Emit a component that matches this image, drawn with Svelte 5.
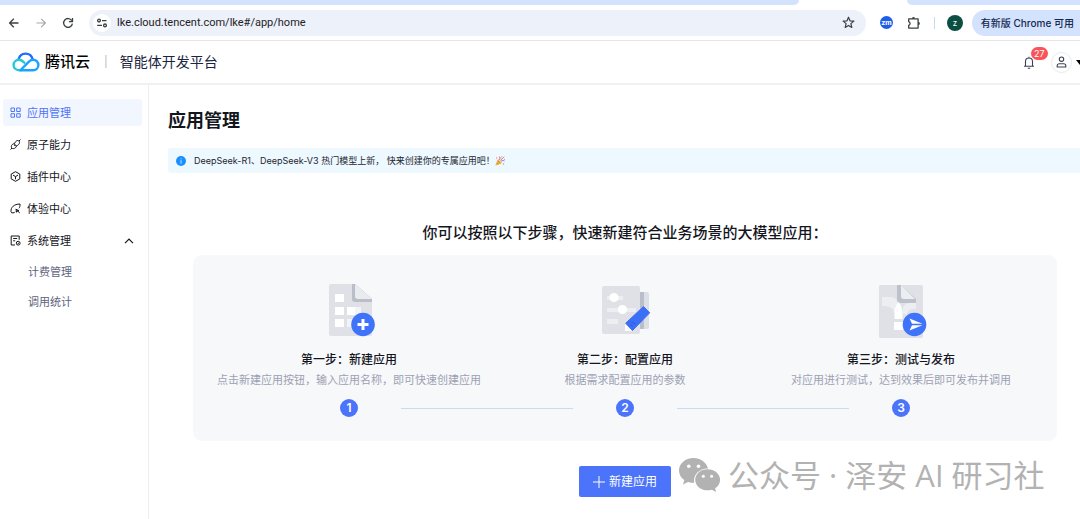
<script lang="ts">
  let expanded = $state(true)
  let current = $state('apps')
  let address = $state('lke.cloud.tencent.com/lke#/app/home')

  const NAV = [
    { id: 'apps',    label: '应用管理' },
    { id: 'atomic',  label: '原子能力' },
    { id: 'plugins', label: '插件中心' },
    { id: 'trial',   label: '体验中心' },
  ]

  const SYSTEM = [
    { id: 'billing', label: '计费管理' },
    { id: 'usage',   label: '调用统计' },
  ]

  const STEPS = [
    { id: 'create',  title: '第一步：新建应用',   desc: '点击新建应用按钮，输入应用名称，即可快速创建应用' },
    { id: 'config',  title: '第二步：配置应用',   desc: '根据需求配置应用的参数' },
    { id: 'publish', title: '第三步：测试与发布', desc: '对应用进行测试，达到效果后即可发布并调用' },
  ]
</script>

<div class="page">
  <!-- Browser chrome -->
  <div class="tabstrip">
    <span class="tab-rest left"></span>
    <span class="tab-rest right"></span>
  </div>
  <div class="toolbar">
    <div class="nav-buttons">
      <button class="icon-btn" aria-label="后退">
        <svg width="12" height="12" viewBox="0 0 12 12" fill="none" stroke="#3c4043" stroke-width="1.3">
          <path d="M10.500 6H1.800M5.800 1.800L1.600 6l4.200 4.200"/>
        </svg>
      </button>
      <button class="icon-btn" aria-label="前进">
        <svg width="12" height="12" viewBox="0 0 12 12" fill="none" stroke="#a5a8ac" stroke-width="1.2">
          <path d="M1.500 6h8.700M6.200 1.800L10.400 6l-4.200 4.200"/>
        </svg>
      </button>
      <button class="icon-btn" aria-label="刷新">
        <svg width="12" height="12" viewBox="0 0 12 12" fill="none" stroke="#3c4043" stroke-width="1.3">
          <path d="M9.800 3.600A4.400 4.400 0 1 0 10.400 6.600"/>
          <path d="M10.500 1v3.600H6.900"/>
        </svg>
      </button>
    </div>
    <div class="address">
      <button class="site-info" aria-label="网站信息">
        <svg width="12" height="12" viewBox="0 0 12 12" fill="none" stroke="#3c4043" stroke-width="1.3">
          <circle cx="3" cy="3.6" r="1.4"/>
          <path d="M6 3.6h4.5M1.2 8.4H6"/>
          <circle cx="9" cy="8.4" r="1.4"/>
        </svg>
      </button>
      <input class="url" aria-label="地址" bind:value={address} />
      <button class="icon-btn" aria-label="收藏">
        <svg width="13" height="13" viewBox="0 0 13 13" fill="none" stroke="#3c4043" stroke-width="1.2" stroke-linejoin="round">
          <path d="M6.5 1.2l1.5 3.6 3.9.3-3 2.5.9 3.8-3.3-2-3.3 2 .9-3.8-3-2.5 3.9-.3z"/>
        </svg>
      </button>
    </div>
    <div class="extensions">
      <button class="ext zoom-ext">zm</button>
      <button class="icon-btn" aria-label="扩展程序">
        <svg width="14" height="14" viewBox="0 0 14 14">
          <path fill="none" stroke="#3c4043" stroke-width="1.3" stroke-linejoin="round" d="M1.700 2.800h9.400v9.300H1.700V9.400a2 2 0 0 0 0-3.800z"/>
          <path fill="#3c4043" d="M4.800 2.800a1.700 1.700 0 0 1 3.400 0zM11.200 5.700a1.700 1.700 0 0 1 0 3.400z"/>
        </svg>
      </button>
      <span class="separator"></span>
      <button class="ext profile">z</button>
      <button class="update">有新版 Chrome 可用</button>
    </div>
  </div>

  <!-- Console header -->
  <header class="header">
    <a class="brand" href="#/">
      <svg width="28" height="20" viewBox="0 0 28 20" fill="none" stroke-width="2.4" stroke-linecap="round">
        <path stroke="#1d6bff" d="M6.600 7.200C7.400 3.900 10 1.600 13.500 1.600c3.600 0 6.200 2.200 7 5.200"/>
        <path stroke="#22c9d6" d="M12.400 10.800C10.800 9 9 7.800 6.900 7.800 4 7.800 1.600 10 1.600 13s2.400 5.200 5.400 5.200h2"/>
        <path stroke="#1aa3ff" d="M9 18.200h12.200c3 0 5.200-2.400 5.200-5.200s-2.300-5.200-5.200-5.200c-1.700 0-3 .6-4.200 1.800L8.600 18"/>
      </svg>
      <span class="brand-name">腾讯云</span>
    </a>
    <span class="bar">|</span>
    <span class="product">智能体开发平台</span>
    <div class="account">
      <button class="bell" aria-label="消息">
        <svg width="12" height="13" viewBox="0 0 12 13" fill="none" stroke="#3b4152" stroke-width="1.1">
          <path d="M1 10.200h10M2.500 10V5.500a3.500 3.500 0 0 1 7 0V10M6 .8V2M4.800 12.300h2.400"/>
        </svg>
        <span class="count">27</span>
      </button>
      <button class="avatar" aria-label="账号">
        <svg width="11" height="12" viewBox="0 0 11 12" fill="none" stroke="#3b4152" stroke-width="1.1">
          <circle cx="5.500" cy="3.200" r="2.200"/>
          <path d="M1.200 11V9.700c0-1.200 1-2 2.200-2h4.200c1.200 0 2.200.8 2.200 2V11z"/>
        </svg>
      </button>
      <svg class="caret" width="8" height="5" viewBox="0 0 8 5"><path d="M0 0h8L4 5z"/></svg>
    </div>
  </header>

  <div class="body">
    <nav class="sidebar">
      {#each NAV as item}
        <a
          class="nav-item {current === item.id ? 'active' : ''}"
          href="#/{item.id}"
          onclick={() => (current = item.id)}
        >
          <svg width="11" height="11" viewBox="0 0 11 11" fill="none" stroke="currentColor" stroke-width="1">
            {#if item.id === 'apps'}
              <path d="M1 1h3.500v3.500H1zM6.700 1h3.500v3.500H6.700zM1 6.700h3.500v3.500H1zM6.700 6.700h3.500v3.500H6.700z"/>
            {:else if item.id === 'atomic'}
              <!-- Linked plugs -->
              <path d="M4.600 4.200l1-1.500c1-1.300 2.400-1.500 3.300-.7s.9 2.200-.2 3.300L7.400 6.500c-.7.500-1.600.4-2.200-.1s-1-1.400-.6-2.200z"/>
              <path d="M4.300 4.600c-1.500.2-3 1.400-3 2.900 0 1.400.9 2.100 2.100 2.100 1.600 0 2.900-1.300 3.100-2.800M2 9L.5 10.500M9 2L10.500.5M4.200 6.800l1.200-1.200"/>
            {:else if item.id === 'plugins'}
              <path stroke-linejoin="round" d="M5.500.7l4.300 2.400v4.800L5.500 10.300 1.200 7.900V3.100z"/>
              <path d="M3 4.100l2.500 1.500L8 4.100M5.500 5.600v2.700"/>
            {:else}
              <path d="M4 9.800H1.700L1 8.500C.6 4.500 4 1 10 1c.2 1.700-.2 3.200-1 4.300"/>
              <path d="M5.800 6.200l4 3.800M6 6.300l.5 3 .9-1.300 1.500-.4zM4 9.800l1-1"/>
            {/if}
          </svg>
          {item.label}
        </a>
      {/each}
      <button class="nav-item" aria-expanded={expanded} onclick={() => (expanded = !expanded)}>
        <svg width="11" height="11" viewBox="0 0 11 11" fill="none" stroke="currentColor" stroke-width="1">
          <path d="M5 10H1.200V1h8v3.800M3.200 3.500h4M3.200 5.800h2"/>
          <circle cx="8.200" cy="8.200" r="1.900"/>
          <circle cx="8.200" cy="8.200" r=".3"/>
        </svg>
        系统管理
        <svg class="chevron" class:closed={!expanded} width="10" height="6" viewBox="0 0 10 6" fill="none" stroke="currentColor" stroke-width="1.2">
          <path d="M1 5.200l4-4 4 4"/>
        </svg>
      </button>
      {#if expanded}
        <div class="sub">
          {#each SYSTEM as item}
            <a class="sub-item" href="#/{item.id}">{item.label}</a>
          {/each}
        </div>
      {/if}
    </nav>

    <main class="main">
      <h1>应用管理</h1>
      <div class="notice">
        <svg width="10" height="10" viewBox="0 0 10 10">
          <circle cx="5" cy="5" r="5" fill="#1890ff"/>
          <path d="M5 2.300v1M5 4.200v3.500" stroke="#b9deff"/>
        </svg>
        <span>DeepSeek-R1、DeepSeek-V3 热门模型上新， 快来创建你的专属应用吧！</span>
        <svg width="10" height="10" viewBox="0 0 10 10" fill="none">
          <path fill="#f2b13c" d="M.3 9.700L3 3l4 4z"/>
          <path stroke="#c7772f" stroke-width=".7" d="M1.600 6.800l1.700 1.700M2.500 4.800l2.800 2.700"/>
          <path stroke="#d64b6a" d="M4.500 3.800C5.400 2.700 5 1.400 4.300.6"/>
          <path stroke="#7a6fd0" d="M6 5.500c1-1.200 2.400-1.200 3.500-.5"/>
          <path stroke="#e58a3a" d="M5.500 4.500l3.700-3.800"/>
          <path fill="#e0568a" d="M1.200 1.500h1v1h-1zM8 7.500h1.100v1.100H8z"/>
          <path fill="#4b9fd8" d="M6.400.6h.9v.9h-.9zM8.900 2.800h.9v.9h-.9z"/>
        </svg>
      </div>

      <section class="guide">
        <h2>你可以按照以下步骤，快速新建符合业务场景的大模型应用：</h2>
        <div class="card">
          <div class="steps">
            {#each STEPS as step}
              <div class="step">
                <svg width="56" height="56" viewBox="0 0 56 56">
                  {#if step.id === 'create'}
                    <!-- Sheet with a folded corner and a plus badge -->
                    <path fill="#dfe1e7" d="M10 2h24l17 15v35a2 2 0 0 1-2 2H10a2 2 0 0 1-2-2V4a2 2 0 0 1 2-2z"/>
                    <path fill="#b9bec8" d="M31 2h3l17 15v3H34a3 3 0 0 1-3-3z"/>
                    <path fill="#e9ebef" d="M34 2l17 15H37a3 3 0 0 1-3-3z"/>
                    <path fill="#fff" d="M14 12h9v8h-9zM14 25h9v8h-9zM14 37h9v8h-9zM26 25h8v8h-8z"/>
                    <path fill="#f3f4f7" d="M34 25h6v8h-6zM26 37h9v8h-9z"/>
                    <circle cx="42" cy="42.500" r="11.800" fill="#3f73fa"/>
                    <path d="M42 37v11M36.500 42.500h11" stroke="#fff" stroke-width="3"/>
                  {:else if step.id === 'config'}
                    <!-- Sliders panel and a pen -->
                    <rect x="38" y="10" width="14" height="37" rx="2" fill="#dcdfe5"/>
                    <path fill="#b9bfca" d="M42 10h5v37h-5z"/>
                    <rect x="5" y="4" width="38" height="48" rx="2" fill="#dfe1e7"/>
                    <path fill="#eceef2" d="M10 14h16v4H10zM10 26h29v4H10zM10 37h11v5H10z"/>
                    <circle cx="17" cy="15.500" r="4.600" fill="#fff"/>
                    <circle cx="25.500" cy="27.500" r="4.600" fill="#fff"/>
                    <path fill="#fff" d="M28 42v7h7z"/>
                    <path fill="#3b6ff6" stroke="#3b6ff6" stroke-linejoin="round" d="M46.500 24.500l6.200 6.300-17.200 17.700-6.800-7.300z"/>
                    <path stroke="#2a5be0" d="M33 43l3 1M34 40l5 2"/>
                  {:else}
                    <!-- Sheet with an up arrow and a send badge -->
                    <path fill="#dfe1e7" d="M8 3h40a2 2 0 0 1 2 2v49a2 2 0 0 1-2 2H8a2 2 0 0 1-2-2V5a2 2 0 0 1 2-2z"/>
                    <path fill="#eceef2" d="M9 15h8c6 0 8 3 8 9v6h-4c-1-4-4-6-12-6zM43 21c-6-1-12 0-13 5v6h4c1-4 4-5 9-5z"/>
                    <path fill="#bcc1cb" d="M24 3h4l15 14v4H28a4 4 0 0 1-4-4z"/>
                    <path fill="#eceef2" d="M28 3l14 14H31a3 3 0 0 1-3-3z"/>
                    <path fill="#fff" d="M25.500 20c3 4 4 7 4 11v6h-8v-6c0-4 1-7 4-11zM21 40h9v8h-9z"/>
                    <circle cx="41.500" cy="42.500" r="11.800" fill="#3f73fa"/>
                    <path fill="#fff" d="M36.500 36.500l13 5.300H39zM39 43.200h10.500l-13 5.300z"/>
                  {/if}
                </svg>
                <h3>{step.title}</h3>
                <p>{step.desc}</p>
              </div>
            {/each}
          </div>
          <div class="timeline">
            {#each STEPS as step, i}
              {#if i > 0}<span class="line"></span>{/if}
              <span class="num">{i + 1}</span>
            {/each}
          </div>
        </div>
        <div class="actions">
          <button class="create">
            <svg width="12" height="12" viewBox="0 0 12 12" stroke="#fff" stroke-width="1"><path d="M6 0v12M0 6h12"/></svg>
            新建应用
          </button>
          <div class="watermark">
            <svg width="42" height="36" viewBox="0 0 42 36">
              <path fill="#b2b2b2" d="M14.500 1C6.500 1 0 6.500 0 13.500c0 4 2 7.300 5.300 9.600L4 27.500l5-2.600c2 .6 4 .8 6.300.8-1.500-8 5-14.200 13.700-14.200C27.500 5.300 21.500 1 14.500 1z"/>
              <path fill="#b2b2b2" d="M28.500 12.200c-7 0-12.300 4.700-12.300 10.500s5.300 10.600 12.300 10.600c1.600 0 3-.2 4.400-.6l4.300 2.200-1.100-3.600c3-2 5-5 5-8.600 0-5.800-5.600-10.500-12.600-10.500z"/>
              <g fill="#fff">
                <circle cx="9.800" cy="9.300" r="1.800"/><circle cx="19.500" cy="9.300" r="1.800"/>
                <circle cx="24.300" cy="19.300" r="1.500"/><circle cx="32.600" cy="19.300" r="1.500"/>
              </g>
            </svg>
            <span>公众号 · 泽安 AI 研习社</span>
          </div>
        </div>
      </section>
    </main>
  </div>
</div>

<style>
  :global(body) { margin: 0; background: #fff; }

  .page {
    min-height: 100vh;
    display: flex;
    flex-direction: column;
    overflow: hidden;
    font-family: Inter, "Noto Sans CJK SC", sans-serif;
    font-size: 11px;
    line-height: 16px;
    color: #14161d;
  }
  button {
    font: inherit;
    color: inherit;
    border: none;
    background: none;
    padding: 0;
    cursor: pointer;
  }
  a { color: inherit; text-decoration: none; }
  svg { display: block; flex-shrink: 0; }
  h1, h2, h3, p { margin: 0; }

  /* Browser chrome */
  .tabstrip {
    display: flex;
    justify-content: space-between;
    height: 5px;
  }
  .tab-rest { background: #d3e2fd; }
  .left { width: 74%; border-bottom-right-radius: 5px; }
  .right { width: 16%; border-bottom-left-radius: 5px; }

  .toolbar {
    display: flex;
    align-items: center;
    height: 35px;
    border-bottom: 1px solid #e4e6ea;
  }
  .nav-buttons {
    display: flex;
    gap: 15px;
    padding: 0 15px 0 8px;
  }
  .address {
    flex: 1;
    display: flex;
    align-items: center;
    height: 26px;
    padding: 0 11px 0 4px;
    border-radius: 13px;
    background: #ecf1fa;
  }
  .site-info {
    display: flex;
    align-items: center;
    justify-content: center;
    width: 18px;
    height: 18px;
    border-radius: 50%;
    background: #fff;
  }
  .url {
    flex: 1;
    min-width: 0;
    padding: 0 6px;
    border: none;
    outline: none;
    background: none;
    font-family: Roboto, sans-serif;
    font-size: 11px;
    color: #1f2124;
  }
  .extensions {
    display: flex;
    align-items: center;
    padding-left: 14px;
  }
  .ext {
    border-radius: 50%;
    color: #fff;
    font-size: 8px;
    line-height: 1;
  }
  .zoom-ext {
    width: 13px;
    height: 13px;
    margin-right: 14px;
    background: #1f5fe8;
    font-size: 7px;
    font-weight: 700;
  }
  .separator {
    width: 1px;
    height: 12px;
    margin: 0 12px 0 13px;
    background: #c4d8fa;
  }
  .profile {
    width: 16px;
    height: 16px;
    margin-right: 9px;
    background: #0b4f43;
  }
  .update {
    height: 26px;
    padding: 0 6px 0 9px;
    border-radius: 13px 0 0 13px;
    background: #d3e2fd;
    color: #14284d;
    font-weight: 500;
    font-size: 10px;
    white-space: nowrap;
  }

  /* Console header */
  .header {
    display: flex;
    align-items: center;
    height: 42px;
    padding-left: 12px;
    border-bottom: 2px solid #f0f1f3;
  }
  .brand { display: flex; align-items: center; gap: 5px; }
  .brand-name { font-size: 15px; font-weight: 500; color: #000; }
  .bar { margin: 0 12px 0 14px; color: #b4b7bf; }
  .product { font-size: 14px; color: #1c2540; }
  .account {
    display: flex;
    align-items: center;
    margin-left: auto;
    margin-right: -4px;
  }
  .bell { position: relative; margin-right: 16px; }
  .count {
    position: absolute;
    top: -9px;
    left: 8px;
    padding: 0 3px;
    border-radius: 7px;
    background: #f9545a;
    color: #fff;
    font-size: 9px;
    line-height: 13px;
  }
  .avatar {
    display: flex;
    align-items: center;
    justify-content: center;
    width: 21px;
    height: 21px;
    margin-right: 4px;
    border: 1px solid #e8eaef;
    border-radius: 50%;
  }

  .body { flex: 1; display: flex; }

  /* Sidebar */
  .sidebar {
    width: 139px;
    flex-shrink: 0;
    display: flex;
    flex-direction: column;
    gap: 5px;
    padding: 14px 6px 0 3px;
    border-right: 1px solid #eeeff2;
  }
  .nav-item {
    display: flex;
    align-items: center;
    gap: 6px;
    height: 27px;
    padding: 0 8px 0 7px;
    border-radius: 3px;
  }
  .nav-item.active { background: #f1f6ff; color: #4f74f7; }
  .chevron { margin-left: auto; }
  .chevron.closed { transform: rotate(180deg); }
  .sub { display: flex; flex-direction: column; margin-top: -2px; }
  .sub-item {
    padding-left: 25px;
    line-height: 30px;
    color: #5d6580;
  }

  /* Main column */
  .main { flex: 1; min-width: 0; padding: 22px 0 20px 19px; }
  h1 { font-size: 18px; font-weight: 600; line-height: 28px; }
  .notice {
    display: flex;
    align-items: center;
    height: 25px;
    margin-top: 13px;
    padding-left: 8px;
    border-radius: 3px 0 0 3px;
    background: #edf8ff;
    font-size: 9px;
    color: #22262f;
  }
  .notice span { margin-left: 8px; }

  .guide { padding: 0 23px 0 25px; }
  h2 {
    margin: 48px 0 11px;
    font-size: 15px;
    font-weight: 500;
    line-height: 23px;
    text-align: center;
  }
  .card {
    padding: 27px 0 24px;
    border-radius: 9px;
    background: #f7f8fa;
  }
  .steps {
    display: grid;
    grid-template-columns: repeat(3, 1fr);
    padding: 0 18px;
  }
  .step {
    display: flex;
    flex-direction: column;
    align-items: center;
    text-align: center;
  }
  h3 { margin-top: 12px; font-size: 12px; font-weight: 500; line-height: 20px; }
  .step p { line-height: 20px; color: #9ca1b3; }

  /* Badges sit under the column centres of .steps */
  .timeline {
    display: flex;
    align-items: center;
    margin-top: 9px;
    padding: 0 calc((100% - 36px) / 6 + 9px);
  }
  .num {
    width: 18px;
    border-radius: 50%;
    background: #4b74fb;
    color: #fff;
    font-size: 12px;
    font-weight: 600;
    line-height: 18px;
    text-align: center;
  }
  .line { flex: 1; height: 1px; margin: 0 43px; background: #c8daf4; }

  .actions {
    position: relative;
    display: flex;
    justify-content: center;
    margin-top: 25px;
  }
  .create {
    display: flex;
    align-items: center;
    gap: 4px;
    height: 31px;
    padding: 0 14px;
    border-radius: 2px;
    background: #4b74fb;
    color: #fff;
    font-size: 12px;
  }
  .watermark {
    position: absolute;
    top: -10px;
    left: calc(50% + 54px);
    display: flex;
    align-items: center;
    gap: 7px;
    color: #b2b2b2;
    font-family: "Open Sans", "Noto Sans CJK SC", sans-serif;
    font-size: 31px;
    line-height: 38px;
    white-space: nowrap;
  }
</style>
